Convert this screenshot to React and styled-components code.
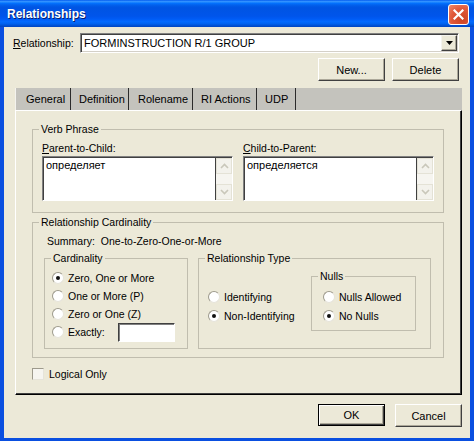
import styled, { createGlobalStyle } from 'styled-components';

const GlobalStyle = createGlobalStyle`
  html, body {
    margin: 0;
    padding: 0;
    background: #ffffff;
  }
  body {
    font-family: "Liberation Sans", Arial, sans-serif;
    font-size: 10.5px;
    color: #000;
  }
`;

const tabs = [
  { label: 'General', width: 56, pad: 10 },
  { label: 'Definition', width: 58, pad: 7 },
  { label: 'Rolename', width: 64, pad: 8 },
  { label: 'RI Actions', width: 64, pad: 7 },
  { label: 'UDP', width: 39, pad: 7 },
];

const cardinality = [
  { label: 'Zero, One or More', checked: true },
  { label: 'One or More (P)' },
  { label: 'Zero or One (Z)' },
];

const App = () => {
  return (
    <>
      <GlobalStyle />
      <Window>
        <TitleBar>
          <Title>Relationships</Title>
          <CloseButton>
            <svg width="11" height="11" viewBox="0 0 11 11">
              <path d="M1.5 1.5 L9.5 9.5 M9.5 1.5 L1.5 9.5" stroke="#fff" strokeWidth="2.2" strokeLinecap="square" />
            </svg>
          </CloseButton>
        </TitleBar>
        <Body>
          <TopRow>
            <FieldLabel>
              <u>R</u>elationship:
            </FieldLabel>
            <Combo>
              <ComboText>FORMINSTRUCTION R/1 GROUP</ComboText>
              <DropButton>
                <svg width="7" height="4" viewBox="0 0 7 4">
                  <path d="M0 0 H7 L3.5 4 Z" fill="#000" />
                </svg>
              </DropButton>
            </Combo>
          </TopRow>
          <ButtonRow>
            <Button>New...</Button>
            <Button>Delete</Button>
          </ButtonRow>

          <TabControl>
            <TabStrip>
              {tabs.map((t, i) => (
                <Tab key={t.label} $width={t.width} $pad={t.pad} $first={i === 0}>
                  {t.label}
                </Tab>
              ))}
            </TabStrip>
            <Panel>
              <Group $pad="12px 9px 11px 9px">
                <GroupLabel>Verb Phrase</GroupLabel>
                <Columns>
                  <div>
                    <SmallLabel>
                      <u>P</u>arent-to-Child:
                    </SmallLabel>
                    <TextBox>
                      <TextArea>определяет</TextArea>
                      <ScrollBar>
                        <ScrollArrow>
                          <svg width="9" height="6" viewBox="0 0 9 6">
                            <path d="M1 5 L4.5 1.5 L8 5" stroke="#c9c7ba" strokeWidth="1.6" fill="none" />
                          </svg>
                        </ScrollArrow>
                        <ScrollArrow>
                          <svg width="9" height="6" viewBox="0 0 9 6">
                            <path d="M1 1 L4.5 4.5 L8 1" stroke="#c9c7ba" strokeWidth="1.6" fill="none" />
                          </svg>
                        </ScrollArrow>
                      </ScrollBar>
                    </TextBox>
                  </div>
                  <div>
                    <SmallLabel>
                      <u>C</u>hild-to-Parent:
                    </SmallLabel>
                    <TextBox>
                      <TextArea>определяется</TextArea>
                      <ScrollBar>
                        <ScrollArrow>
                          <svg width="9" height="6" viewBox="0 0 9 6">
                            <path d="M1 5 L4.5 1.5 L8 5" stroke="#c9c7ba" strokeWidth="1.6" fill="none" />
                          </svg>
                        </ScrollArrow>
                        <ScrollArrow>
                          <svg width="9" height="6" viewBox="0 0 9 6">
                            <path d="M1 1 L4.5 4.5 L8 1" stroke="#c9c7ba" strokeWidth="1.6" fill="none" />
                          </svg>
                        </ScrollArrow>
                      </ScrollBar>
                    </TextBox>
                  </div>
                </Columns>
              </Group>

              <Group $pad="12px 12px 8px 11px" $top={9}>
                <GroupLabel>Relationship Cardinality</GroupLabel>
                <Summary>
                  <span>Summary:</span>
                  <span>One-to-Zero-One-or-More</span>
                </Summary>
                <SubRow>
                  <Group $pad="10px 0 0 7px" $width={144} $height={91}>
                    <GroupLabel>Cardinality</GroupLabel>
                    {cardinality.map((c) => (
                      <RadioRow key={c.label}>
                        <Radio $checked={c.checked} />
                        {c.label}
                      </RadioRow>
                    ))}
                    <RadioRow>
                      <Radio />
                      <ExactlyText>Exactly:</ExactlyText>
                      <SmallInput />
                    </RadioRow>
                  </Group>
                  <Group $pad="17px 14px 0 9px" $height={91} $flex>
                    <GroupLabel>Relationship Type</GroupLabel>
                    <TypeColumn>
                      <RadioRow $h={19}>
                        <Radio />
                        Identifying
                      </RadioRow>
                      <RadioRow $h={19}>
                        <Radio $checked />
                        Non-Identifying
                      </RadioRow>
                    </TypeColumn>
                    <NullsGroup $pad="10px 0 5px 11px" $width={105}>
                      <GroupLabel>Nulls</GroupLabel>
                      <RadioRow $h={19}>
                        <Radio />
                        Nulls Allowed
                      </RadioRow>
                      <RadioRow $h={19}>
                        <Radio $checked />
                        No Nulls
                      </RadioRow>
                    </NullsGroup>
                  </Group>
                </SubRow>
              </Group>

              <CheckRow>
                <CheckBox />
                Logical Only
              </CheckRow>
            </Panel>
          </TabControl>

          <BottomRow>
            <Button $default>OK</Button>
            <Button>Cancel</Button>
          </BottomRow>
        </Body>
      </Window>
    </>
  );
};

export default App;

const Window = styled.div`
  width: 474px;
  height: 441px;
  display: flex;
  flex-direction: column;
  overflow: hidden;
  background: #0a4fe0;
`;

const TitleBar = styled.div`
  height: 27px;
  flex: none;
  display: flex;
  align-items: center;
  justify-content: space-between;
  padding: 0 5px 0 7px;
  background: linear-gradient(
    to bottom,
    #0058ee 0%,
    #3593ff 5%,
    #1a84ff 9%,
    #036ffc 13%,
    #0262ee 18%,
    #0057e5 25%,
    #0054e3 30%,
    #0055eb 60%,
    #005bf5 70%,
    #026afe 80%,
    #0062ef 88%,
    #0052d6 94%,
    #0044c0 100%
  );
`;

const Title = styled.span`
  font-family: "Liberation Sans", Arial, sans-serif;
  font-weight: bold;
  font-size: 12px;
  color: #fff;
  text-shadow: 1px 1px 0 #0a1e6e;
  margin-top: 1px;
`;

const CloseButton = styled.div`
  width: 21px;
  height: 21px;
  box-sizing: border-box;
  border: 1px solid #fff;
  border-radius: 3px;
  background: radial-gradient(circle at 70% 75%, #cc4424 0%, #e0593a 55%, #f08a6c 100%);
  display: flex;
  align-items: center;
  justify-content: center;
  margin-top: 1px;
`;

const Body = styled.div`
  flex: 1;
  display: flex;
  flex-direction: column;
  background: #ece9d8;
  border-style: solid;
  border-color: #0a4fe0;
  border-width: 0 4px 3px 4px;
  padding: 6px 0 11px 0;
  min-height: 0;
`;

const TopRow = styled.div`
  display: flex;
  align-items: center;
  height: 20px;
  margin: 0 11px 0 9px;
`;

const FieldLabel = styled.span`
  width: 67px;
  flex: none;
`;

const Combo = styled.div`
  flex: 1;
  height: 20px;
  box-sizing: border-box;
  display: flex;
  align-items: center;
  background: #fff;
  border: 1px solid;
  border-color: #808080 #fff #fff #808080;
  box-shadow: inset 1px 1px 0 #404040, inset -1px -1px 0 #d4d0c8;
  padding: 0 1px 0 3px;
`;

const ComboText = styled.span`
  flex: 1;
  font-size: 11px;
`;

const DropButton = styled.div`
  width: 16px;
  height: 16px;
  box-sizing: border-box;
  background: #ece9d8;
  border: 1px solid;
  border-color: #f4f3ee #404040 #404040 #f4f3ee;
  box-shadow: inset -1px -1px 0 #aca899;
  display: flex;
  align-items: center;
  justify-content: center;
`;

const ButtonRow = styled.div`
  display: flex;
  justify-content: flex-end;
  gap: 7px;
  margin: 5px 11px 0 0;
`;

const Button = styled.div`
  width: 67px;
  height: ${(p) => (p.$default ? 22 : 23)}px;
  box-sizing: border-box;
  display: flex;
  align-items: center;
  justify-content: center;
  background: #ece9d8;
  border: 1px solid;
  border-color: ${(p) => (p.$default ? '#000' : '#fff #404040 #404040 #fff')};
  box-shadow: ${(p) =>
    p.$default
      ? 'inset 1px 1px 0 #fff, inset -1px -1px 0 #404040, inset -2px -2px 0 #aca899'
      : 'inset -1px -1px 0 #aca899'};
  font-size: 11px;
`;

const TabControl = styled.div`
  flex: 1;
  display: flex;
  flex-direction: column;
  margin: 7px 8px 0 11px;
  min-height: 0;
`;

const TabStrip = styled.div`
  height: 22px;
  flex: none;
  display: flex;
  background: #c4c3bd;
`;

const Tab = styled.div`
  width: ${(p) => p.$width}px;
  box-sizing: border-box;
  display: flex;
  align-items: center;
  padding-left: ${(p) => p.$pad}px;
  border-left: 1px solid ${(p) => (p.$first ? '#f4f3ee' : 'transparent')};
  border-right: 1px solid #2b2b2b;
  font-size: 11px;
`;

const Panel = styled.div`
  flex: 1;
  display: flex;
  flex-direction: column;
  border-style: solid;
  border-width: 1px 1px 1px 1px;
  border-color: #fff #000 #000 #fff;
  box-shadow: inset -1px -1px 0 #404040;
  padding: 18px 17px 0 16px;
`;

const Group = styled.div`
  position: relative;
  box-sizing: border-box;
  border: 1px solid #c0bdae;
  padding: ${(p) => p.$pad};
  margin-top: ${(p) => p.$top || 0}px;
  ${(p) => (p.$width ? `width: ${p.$width}px; flex: none;` : '')}
  ${(p) => (p.$height ? `height: ${p.$height}px;` : '')}
  ${(p) => (p.$flex ? 'flex: 1; display: flex; align-items: flex-start;' : '')}
`;

const NullsGroup = styled(Group)`
  margin-left: auto;
`;

const GroupLabel = styled.span`
  position: absolute;
  top: -7px;
  left: 6px;
  padding: 0 2px;
  line-height: 13px;
  background: #ece9d8;
`;

const Columns = styled.div`
  display: grid;
  grid-template-columns: 1fr 1fr;
  column-gap: 10px;
`;

const SmallLabel = styled.div`
  line-height: 13px;
  margin-bottom: 1px;
`;

const TextBox = styled.div`
  height: 45px;
  box-sizing: border-box;
  display: flex;
  border: 1px solid;
  border-color: #808080 #fff #fff #808080;
  background: #fff;
`;

const TextArea = styled.div`
  flex: 1;
  border-top: 1px solid #404040;
  border-left: 1px solid #404040;
  border-right: 1px solid #404040;
  padding: 1px 2px;
  font-size: 11px;
`;

const ScrollBar = styled.div`
  width: 16px;
  display: flex;
  flex-direction: column;
  justify-content: space-between;
  background: #f6f5f0;
  border-top: 1px solid #404040;
`;

const ScrollArrow = styled.div`
  height: 16px;
  box-sizing: border-box;
  border: 1px solid #e4e2d6;
  background: #f3f2ec;
  display: flex;
  align-items: center;
  justify-content: center;
`;

const Summary = styled.div`
  display: flex;
  gap: 6px;
  line-height: 13px;
  padding-left: 3px;
`;

const SubRow = styled.div`
  display: flex;
  gap: 10px;
  margin-top: 10px;
`;

const RadioRow = styled.div`
  display: flex;
  align-items: center;
  height: ${(p) => p.$h || 18}px;
  gap: 4px;
  white-space: nowrap;
`;

const Radio = styled.span`
  width: 12px;
  height: 12px;
  flex: none;
  box-sizing: border-box;
  border-radius: 50%;
  border: 1px solid;
  border-color: #9d9a8c #e6e4da #e6e4da #9d9a8c;
  background: #fff;
  display: flex;
  align-items: center;
  justify-content: center;
  &::after {
    content: '';
    width: 4px;
    height: 4px;
    border-radius: 50%;
    background: ${(p) => (p.$checked ? '#111' : 'transparent')};
  }
`;

const ExactlyText = styled.span`
  width: 46px;
`;

const SmallInput = styled.div`
  width: 57px;
  height: 19px;
  box-sizing: border-box;
  background: #fff;
  border: 1px solid;
  border-color: #404040 #fff #fff #404040;
  box-shadow: inset 1px 1px 0 #808080;
`;

const TypeColumn = styled.div`
  margin-top: 11px;
`;

const CheckRow = styled.div`
  display: flex;
  align-items: center;
  gap: 5px;
  height: 13px;
  margin-top: 9px;
`;

const CheckBox = styled.span`
  width: 12px;
  height: 12px;
  box-sizing: border-box;
  border: 1px solid;
  border-color: #9d9a8c #e6e4da #e6e4da #9d9a8c;
  background: #f6f5f0;
`;

const BottomRow = styled.div`
  display: flex;
  justify-content: flex-end;
  gap: 10px;
  margin: 9px 8px 0 0;
`;
